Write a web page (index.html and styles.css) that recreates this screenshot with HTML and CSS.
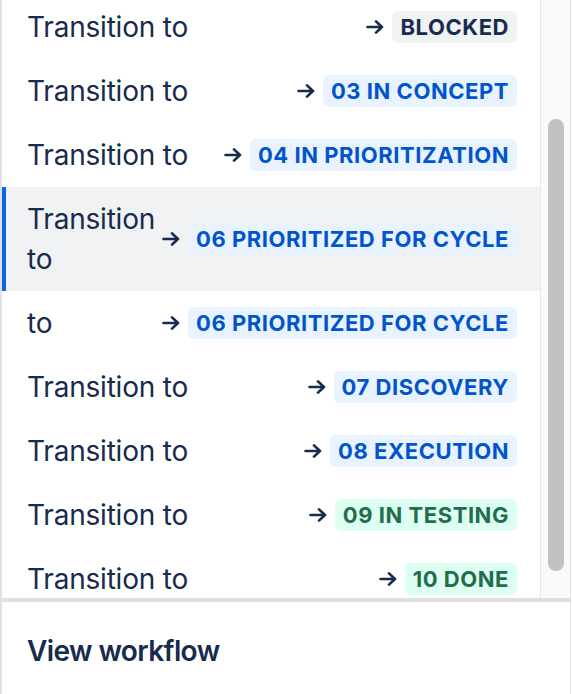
FILE: index.html
```html
<!DOCTYPE html>
<html>
<head>
<meta charset="utf-8">
<link rel="stylesheet" href="styles.css">
</head>
<body>
<div class="popup">
  <div class="list">
    <div class="items">
      <div class="scroller">
        <div class="row">
          <span class="label">Transition to</span>
          <span class="target"><svg class="arrow" viewBox="0 0 18 14"><path d="M1.5 7h14.5M10 1.4l6 5.6-6 5.6"/></svg><span class="loz gray">BLOCKED</span></span>
        </div>
        <div class="row">
          <span class="label">Transition to</span>
          <span class="target"><svg class="arrow" viewBox="0 0 18 14"><path d="M1.5 7h14.5M10 1.4l6 5.6-6 5.6"/></svg><span class="loz blue">03 IN CONCEPT</span></span>
        </div>
        <div class="row">
          <span class="label">Transition to</span>
          <span class="target"><svg class="arrow" viewBox="0 0 18 14"><path d="M1.5 7h14.5M10 1.4l6 5.6-6 5.6"/></svg><span class="loz blue">04 IN PRIORITIZATION</span></span>
        </div>
        <div class="row active">
          <span class="label">Transition to</span>
          <span class="target"><svg class="arrow" viewBox="0 0 18 14"><path d="M1.5 7h14.5M10 1.4l6 5.6-6 5.6"/></svg><span class="loz blue">06 PRIORITIZED FOR CYCLE</span></span>
        </div>
        <div class="row">
          <span class="label">to</span>
          <span class="target"><svg class="arrow" viewBox="0 0 18 14"><path d="M1.5 7h14.5M10 1.4l6 5.6-6 5.6"/></svg><span class="loz blue">06 PRIORITIZED FOR CYCLE</span></span>
        </div>
        <div class="row">
          <span class="label">Transition to</span>
          <span class="target"><svg class="arrow" viewBox="0 0 18 14"><path d="M1.5 7h14.5M10 1.4l6 5.6-6 5.6"/></svg><span class="loz blue">07 DISCOVERY</span></span>
        </div>
        <div class="row">
          <span class="label">Transition to</span>
          <span class="target"><svg class="arrow" viewBox="0 0 18 14"><path d="M1.5 7h14.5M10 1.4l6 5.6-6 5.6"/></svg><span class="loz blue">08 EXECUTION</span></span>
        </div>
        <div class="row">
          <span class="label">Transition to</span>
          <span class="target"><svg class="arrow" viewBox="0 0 18 14"><path d="M1.5 7h14.5M10 1.4l6 5.6-6 5.6"/></svg><span class="loz green">09 IN TESTING</span></span>
        </div>
        <div class="row">
          <span class="label">Transition to</span>
          <span class="target"><svg class="arrow" viewBox="0 0 18 14"><path d="M1.5 7h14.5M10 1.4l6 5.6-6 5.6"/></svg><span class="loz green">10 DONE</span></span>
        </div>
      </div>
    </div>
    <div class="scrollbar"><div class="thumb"></div></div>
  </div>
  <div class="sep"></div>
  <div class="footer">View workflow</div>
</div>
</body>
</html>
```

FILE: styles.css
```css
html, body {
  margin: 0;
  padding: 0;
  background: #ffffff;
}
body {
  width: 572px;
  height: 694px;
  overflow: hidden;
  font-family: Inter, "Noto Sans", "Liberation Sans", sans-serif;
  color: #172b4d;
}
.popup {
  width: 568px;
  height: 694px;
  border-left: 2px solid #dfe1e6;
  border-right: 1px solid #e2e3e6;
  display: flex;
  flex-direction: column;
  background: #fff;
}
.list {
  height: 598px;
  display: flex;
  overflow: hidden;
}
.items {
  flex: 1;
  min-width: 0;
  overflow: hidden;
}
.scroller {
  margin-top: -5px;
}
.row {
  display: flex;
  align-items: center;
  justify-content: space-between;
  gap: 10px;
  min-height: 64px;
  padding: 12px 23px 12px 21px;
  box-sizing: border-box;
  border-left: 4px solid transparent;
}
.row.active {
  background: #f1f2f4;
  border-left-color: #0c66e4;
}
.label {
  font-size: 28px;
  line-height: 40px;
  letter-spacing: -0.2px;
  min-width: 0;
  flex: 0 1 auto;
}
.target {
  display: flex;
  align-items: center;
  gap: 8px;
  flex-shrink: 0;
}
.arrow {
  width: 18px;
  height: 14px;
  fill: none;
  stroke: #172b4d;
  stroke-width: 2.6;
  stroke-linecap: round;
  stroke-linejoin: round;
}
.loz {
  font-size: 22px;
  font-weight: 700;
  line-height: 32px;
  height: 32px;
  padding: 0 8px;
  border-radius: 6px;
  letter-spacing: 0.55px;
  white-space: nowrap;
}
.loz.gray { background: #f1f2f4; color: #172b4d; }
.loz.blue { background: #e9f2ff; color: #0055cc; }
.loz.green { background: #dcfff1; color: #216e4e; }
.scrollbar {
  width: 30px;
  flex-shrink: 0;
  background: #fafafa;
  border-left: 1px solid #e8e8e8;
  padding-top: 119px;
  box-sizing: border-box;
}
.thumb {
  width: 16px;
  height: 452px;
  margin-left: 7px;
  border-radius: 8px;
  background: #c1c1c1;
}
.sep {
  height: 4px;
  background: #dcdfe4;
  margin-right: -1px;
}
.footer {
  font-size: 28px;
  font-weight: 600;
  line-height: 40px;
  letter-spacing: -0.6px;
  padding: 29px 25px 0;
}
```
